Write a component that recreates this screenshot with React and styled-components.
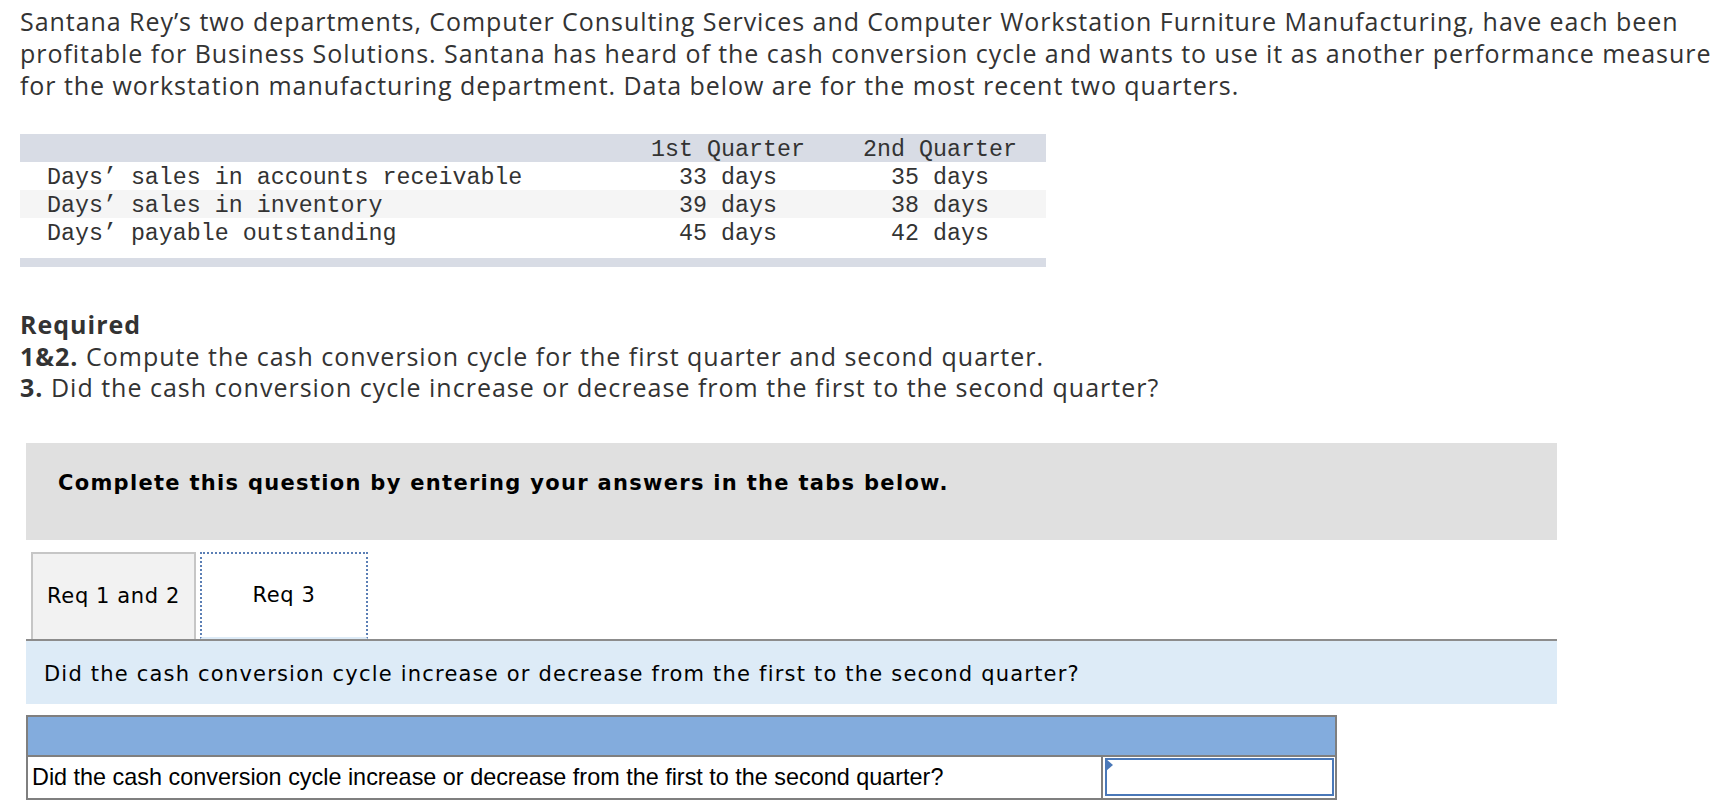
import React from 'react';
import styled, { createGlobalStyle } from 'styled-components';

const GlobalStyle = createGlobalStyle`
  body {
    margin: 0;
    padding: 0;
    background: #fff;
    font-family: "Open Sans", Arial, sans-serif;
  }
  * {
    box-sizing: border-box;
  }
`;

const rows = [
  { label: 'Days\u2019 sales in accounts receivable', q1: '33 days', q2: '35 days' },
  { label: 'Days\u2019 sales in inventory', q1: '39 days', q2: '38 days' },
  { label: 'Days\u2019 payable outstanding', q1: '45 days', q2: '42 days' },
];

const App = () => {
  return (
    <>
      <GlobalStyle />
      <Page>
        <Intro>
          Santana Rey’s two departments, Computer Consulting Services and Computer Workstation Furniture Manufacturing, have each been
          <br />
          profitable for Business Solutions. Santana has heard of the cash conversion cycle and wants to use it as another performance measure
          <br />
          for the workstation manufacturing department. Data below are for the most recent two quarters.
        </Intro>

        <DataTable>
          <HeadRow>
            <Cell />
            <Cell $center>1st Quarter</Cell>
            <Cell $center>2nd Quarter</Cell>
          </HeadRow>
          {rows.map((r, i) => (
            <DataRow key={r.label} $shade={i % 2 === 1}>
              <LabelCell>{r.label}</LabelCell>
              <Cell $center>{r.q1}</Cell>
              <Cell $center>{r.q2}</Cell>
            </DataRow>
          ))}
          <Spacer />
          <FootBand />
        </DataTable>

        <Required>
          <strong>Required</strong>
          <br />
          <strong>1&amp;2.</strong> Compute the cash conversion cycle for the first quarter and second quarter.
          <br />
          <strong>3.</strong> Did the cash conversion cycle increase or decrease from the first to the second quarter?
        </Required>

        <Question>
          <Instructions>Complete this question by entering your answers in the tabs below.</Instructions>

          <TabStrip>
            <Tab>Req 1 and 2</Tab>
            <Tab $active>Req 3</Tab>
          </TabStrip>

          <Prompt>Did the cash conversion cycle increase or decrease from the first to the second quarter?</Prompt>

          <AnswerTable>
            <AnswerHead />
            <AnswerRow>
              <AnswerLabel>Did the cash conversion cycle increase or decrease from the first to the second quarter?</AnswerLabel>
              <AnswerCell>
                <AnswerInput />
              </AnswerCell>
            </AnswerRow>
          </AnswerTable>
        </Question>
      </Page>
    </>
  );
};

export default App;

/* Styled Components */

const Page = styled.div`
  padding: 5px 20px 0 20px;
  width: 1716px;
`;

const Intro = styled.p`
  margin: 0;
  font-size: 25px;
  letter-spacing: 0.95px;
  line-height: 32px;
  color: #333;
  white-space: nowrap;
`;

const DataTable = styled.div`
  margin-top: 33px;
  width: 1026px;
  font-family: "Liberation Mono", "Courier New", monospace;
  font-size: 23.3px;
  color: #333;
`;

const HeadRow = styled.div`
  display: grid;
  grid-template-columns: 1fr 212px 212px;
  height: 28px;
  align-items: center;
  padding-top: 4px;
  background: #d8dce5;
`;

const DataRow = styled(HeadRow)`
  background: ${(p) => (p.$shade ? '#f5f5f5' : '#fff')};
`;

const Cell = styled.div`
  text-align: ${(p) => (p.$center ? 'center' : 'left')};
  white-space: nowrap;
  line-height: 24px;
`;

const LabelCell = styled(Cell)`
  padding-left: 27px;
`;

const Spacer = styled.div`
  height: 12px;
`;

const FootBand = styled.div`
  height: 9px;
  background: #d8dce5;
`;

const Required = styled.div`
  margin-top: 42px;
  font-size: 25px;
  letter-spacing: 1px;
  line-height: 31.5px;
  color: #333;
  white-space: nowrap;

  strong {
    font-weight: 700;
  }
`;

const Question = styled.div`
  margin: 39px 0 0 6px;
  width: 1531px;
  font-family: "DejaVu Sans", Verdana, sans-serif;
`;

const Instructions = styled.div`
  height: 97px;
  background: #e0e0e0;
  padding: 27px 0 0 32px;
  font-size: 21px;
  line-height: 26px;
  letter-spacing: 1.3px;
  font-weight: bold;
  color: #000;
  white-space: nowrap;
`;

const TabStrip = styled.div`
  display: flex;
  gap: 4px;
  margin-top: 12px;
  padding-left: 5px;
  border-bottom: 2px solid #8c8c8c;
`;

const Tab = styled.div`
  display: flex;
  align-items: center;
  justify-content: center;
  width: ${(p) => (p.$active ? '168px' : '165px')};
  height: 87px;
  font-size: 21px;
  letter-spacing: 0.6px;
  color: #000;
  background: ${(p) => (p.$active ? '#fff' : '#f2f2f2')};
  border: ${(p) => (p.$active ? '2px dotted #5b7fb5' : '2px solid #c6c6c6')};
  border-bottom: ${(p) => (p.$active ? '2px solid #ddebf7' : 'none')};
  margin-bottom: ${(p) => (p.$active ? '-2px' : '0')};
`;

const Prompt = styled.div`
  height: 63px;
  background: #ddebf7;
  display: flex;
  align-items: center;
  padding: 3px 0 0 18px;
  font-size: 21px;
  letter-spacing: 1.2px;
  color: #000;
  white-space: nowrap;
`;

const AnswerTable = styled.div`
  margin-top: 11px;
  width: 1311px;
  border: 2px solid #7f7f7f;
`;

const AnswerHead = styled.div`
  height: 40px;
  background: #83acdd;
  border-bottom: 2px solid #7f7f7f;
`;

const AnswerRow = styled.div`
  display: grid;
  grid-template-columns: 1fr 234px;
  height: 41px;
`;

const AnswerLabel = styled.div`
  display: flex;
  align-items: center;
  padding-left: 4px;
  font-family: "Liberation Sans", Arial, sans-serif;
  font-size: 23.4px;
  color: #000;
  white-space: nowrap;
`;

const AnswerCell = styled.div`
  border-left: 2px solid #7f7f7f;
  padding: 1px 1px 2px 2px;
`;

const AnswerInput = styled.div`
  position: relative;
  height: 100%;
  border: 2px solid #4a78b8;
  background: #fff;

  &::before {
    content: '';
    position: absolute;
    left: -1px;
    top: -1px;
    border-left: 7px solid #4a78b8;
    border-top: 6px solid transparent;
    border-bottom: 6px solid transparent;
  }
`;
